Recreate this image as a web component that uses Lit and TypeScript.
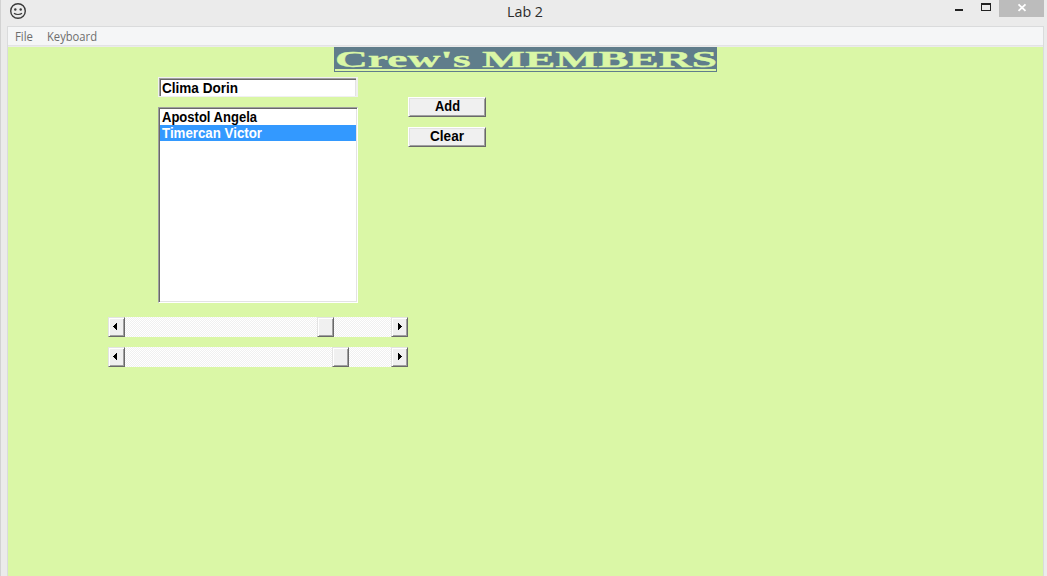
import { LitElement, html, svg, css } from "lit";
import { customElement, property } from "lit/decorators.js";

@customElement("fit-text")
class FitText extends LitElement {
  @property() text = "";
  @property({ type: Number }) width = 50;
  @property({ type: Number }) height = 16;
  @property({ type: Number }) baseline = 12;
  static styles = css`
    :host { display: block; flex: none; }
    svg { display: block; overflow: visible; }
  `;
  render() {
    return html`<svg width=${this.width} height=${this.height}>
      ${svg`<text x="0" y=${this.baseline} fill="currentColor" textLength=${this.width} lengthAdjust="spacingAndGlyphs">${this.text}</text>`}
    </svg>`;
  }
}

@customElement("scroll-bar")
class ScrollBar extends LitElement {
  @property({ type: Number }) position = 0;
  static styles = css`
    :host { display: flex; width: 300px; height: 20px; }
    .track {
      flex: 1;
      display: flex;
      background: repeating-conic-gradient(#f0f0f0 0 25%, #fff 0 50%) 0 0 / 2px 2px;
    }
    .key {
      flex: none;
      box-sizing: border-box;
      width: 17px;
      height: 20px;
      background: #f0f0f0;
      border: 1px solid #e3e3e3;
      border-right-color: #696969;
      border-bottom-color: #696969;
      box-shadow: inset 1px 1px #fff, inset -1px -1px #a0a0a0;
    }
    .key svg { display: block; }
  `;
  render() {
    return html`
      <div class="key"><svg width="15" height="18" shape-rendering="crispEdges"><path d="M4 8h1V7h1V6h1V5h1v7H7v-1H6v-1H5V9H4z" /></svg></div>
      <div class="track"><div class="key" style="margin-left:${this.position}px"></div></div>
      <div class="key"><svg width="15" height="18" shape-rendering="crispEdges"><path d="M6 5h1v1h1v1h1v1h1v1H9v1H8v1H7v1H6z" /></svg></div>
    `;
  }
}

@customElement("app-root")
class AppRoot extends LitElement {
  static styles = css`
    :host {
      display: flex;
      flex-direction: column;
      box-sizing: border-box;
      width: 1047px;
      height: 576px;
      overflow: hidden;
      background: #ebebeb;
      border-left: 1px solid #d2d2d2;
      font-family: "Liberation Sans", Arial, sans-serif;
    }
    .titlebar {
      flex: none;
      display: grid;
      grid-template-columns: 506px 1fr auto;
      height: 26px;
      padding-right: 3px;
    }
    .face { display: block; margin: 2px 0 0 8px; }
    .caption {
      font: 15px "Open Sans", "Noto Sans", sans-serif;
      color: #2b2b2b;
    }
    .controls { display: flex; }
    .controls svg { display: block; }
    .client {
      flex: 1;
      display: flex;
      flex-direction: column;
      margin: 0 3px 0 6px;
      border: 1px solid #dadbdc;
      border-bottom: 0;
    }
    .menu {
      flex: none;
      display: flex;
      gap: 14px;
      height: 18px;
      padding-left: 7px;
      background: #f5f6f7;
      border-bottom: 1px solid #e3e3e5;
      margin-bottom: 1px;
      color: #6d6d6d;
      font: 12px "Open Sans", "Noto Sans", sans-serif;
    }
    .form { flex: 1; background: #daf7a6; }
    .banner {
      box-sizing: border-box;
      width: 383px;
      height: 25px;
      margin: 0 auto;
      padding: 0 1px;
      background: #607d8b;
      color: #daf7a6;
      font: bold 23px "Liberation Serif", "Times New Roman", serif;
    }
    .banner fit-text { stroke: #daf7a6; stroke-width: 0.3px; }
    .rule { height: 2px; background: #daf7a6; }
    .row { display: flex; gap: 50px; margin-left: 150px; padding-top: 5px; }
    .fields { width: 200px; font: bold 14px "Liberation Sans", Arial, sans-serif; color: #000; }
    .edit {
      box-sizing: border-box;
      height: 20px;
      border: 1px solid #f0f0f0;
      border-right-width: 2px;
      background: #fff;
      box-shadow: inset 1px 1px #a0a0a0, inset 2px 2px #696969, inset -1px 0 #e3e3e3;
      padding: 3px 0 0 3px;
    }
    .list {
      box-sizing: border-box;
      height: 196px;
      margin-top: 10px;
      border: 1px solid #a0a0a0;
      border-right-color: #fff;
      border-bottom-color: #fff;
      background: #fff;
      box-shadow: inset 1px 1px #696969, inset -1px -1px #e3e3e3;
      padding: 1px;
    }
    .item { height: 16px; padding-left: 2px; }
    .item.selected { background: #3399ff; color: #fff; }
    .buttons { display: flex; flex-direction: column; gap: 10px; padding-top: 20px; }
    .button {
      display: flex;
      justify-content: center;
      box-sizing: border-box;
      width: 78px;
      height: 20px;
      padding-top: 1px;
      background: #f0f0f0;
      border: 1px solid #fff;
      border-right-color: #696969;
      border-bottom-color: #696969;
      box-shadow: inset 1px 1px #e3e3e3, inset -1px -1px #a0a0a0;
      font: bold 14px "Liberation Sans", Arial, sans-serif;
      color: #000;
    }
    .bars { display: flex; flex-direction: column; gap: 10px; margin: 14px 0 0 100px; }
  `;

  render() {
    return html`
      <div class="titlebar">
        <svg class="face" width="18" height="18" fill="none" stroke="#3a3a3a">
          <circle cx="9" cy="9" r="7.3" stroke-width="1.4" />
          <path d="M5 11.3c1.8 1.6 6.2 1.6 8 0" stroke-width="1.2" />
          <circle cx="6.3" cy="7.5" r="1.2" fill="#3a3a3a" stroke="none" />
          <circle cx="11.7" cy="7.5" r="1.2" fill="#3a3a3a" stroke="none" />
        </svg>
        <fit-text class="caption" text="Lab 2" width="36" height="26" baseline="17"></fit-text>
        <div class="controls">
          <svg width="90" height="17" shape-rendering="crispEdges">
            <path d="M45 0h45v17H45z" fill="#bcbcbc" />
            <path d="M1 9h8v2H1zM27 3h10v8H27zM28 5v5h8V5z" fill="#222" fill-rule="evenodd" />
            <path d="M64.5 4.3l7 6.6M71.5 4.3l-7 6.6" stroke="#fff" stroke-width="1.8" shape-rendering="auto" />
          </svg>
        </div>
      </div>
      <div class="client">
        <div class="menu">
          <fit-text text="File" width="18" height="18" baseline="14"></fit-text>
          <fit-text text="Keyboard" width="50" height="18" baseline="14"></fit-text>
        </div>
        <div class="form">
          <div class="banner">
            <fit-text text="Crew's MEMBERS" width="382" height="22" baseline="20"></fit-text>
            <div class="rule"></div>
          </div>
          <div class="row">
            <div class="fields">
              <div class="edit"><fit-text text="Clima Dorin" width="76" height="14" baseline="12"></fit-text></div>
              <div class="list">
                <div class="item"><fit-text text="Apostol Angela" width="95" height="16" baseline="13"></fit-text></div>
                <div class="item selected"><fit-text text="Timercan Victor" width="100" height="16" baseline="13"></fit-text></div>
              </div>
            </div>
            <div class="buttons">
              <div class="button"><fit-text text="Add" width="25" height="16" baseline="12"></fit-text></div>
              <div class="button"><fit-text text="Clear" width="34" height="16" baseline="12"></fit-text></div>
            </div>
          </div>
          <div class="bars">
            <scroll-bar .position=${192}></scroll-bar>
            <scroll-bar .position=${207}></scroll-bar>
          </div>
        </div>
      </div>
    `;
  }
}
